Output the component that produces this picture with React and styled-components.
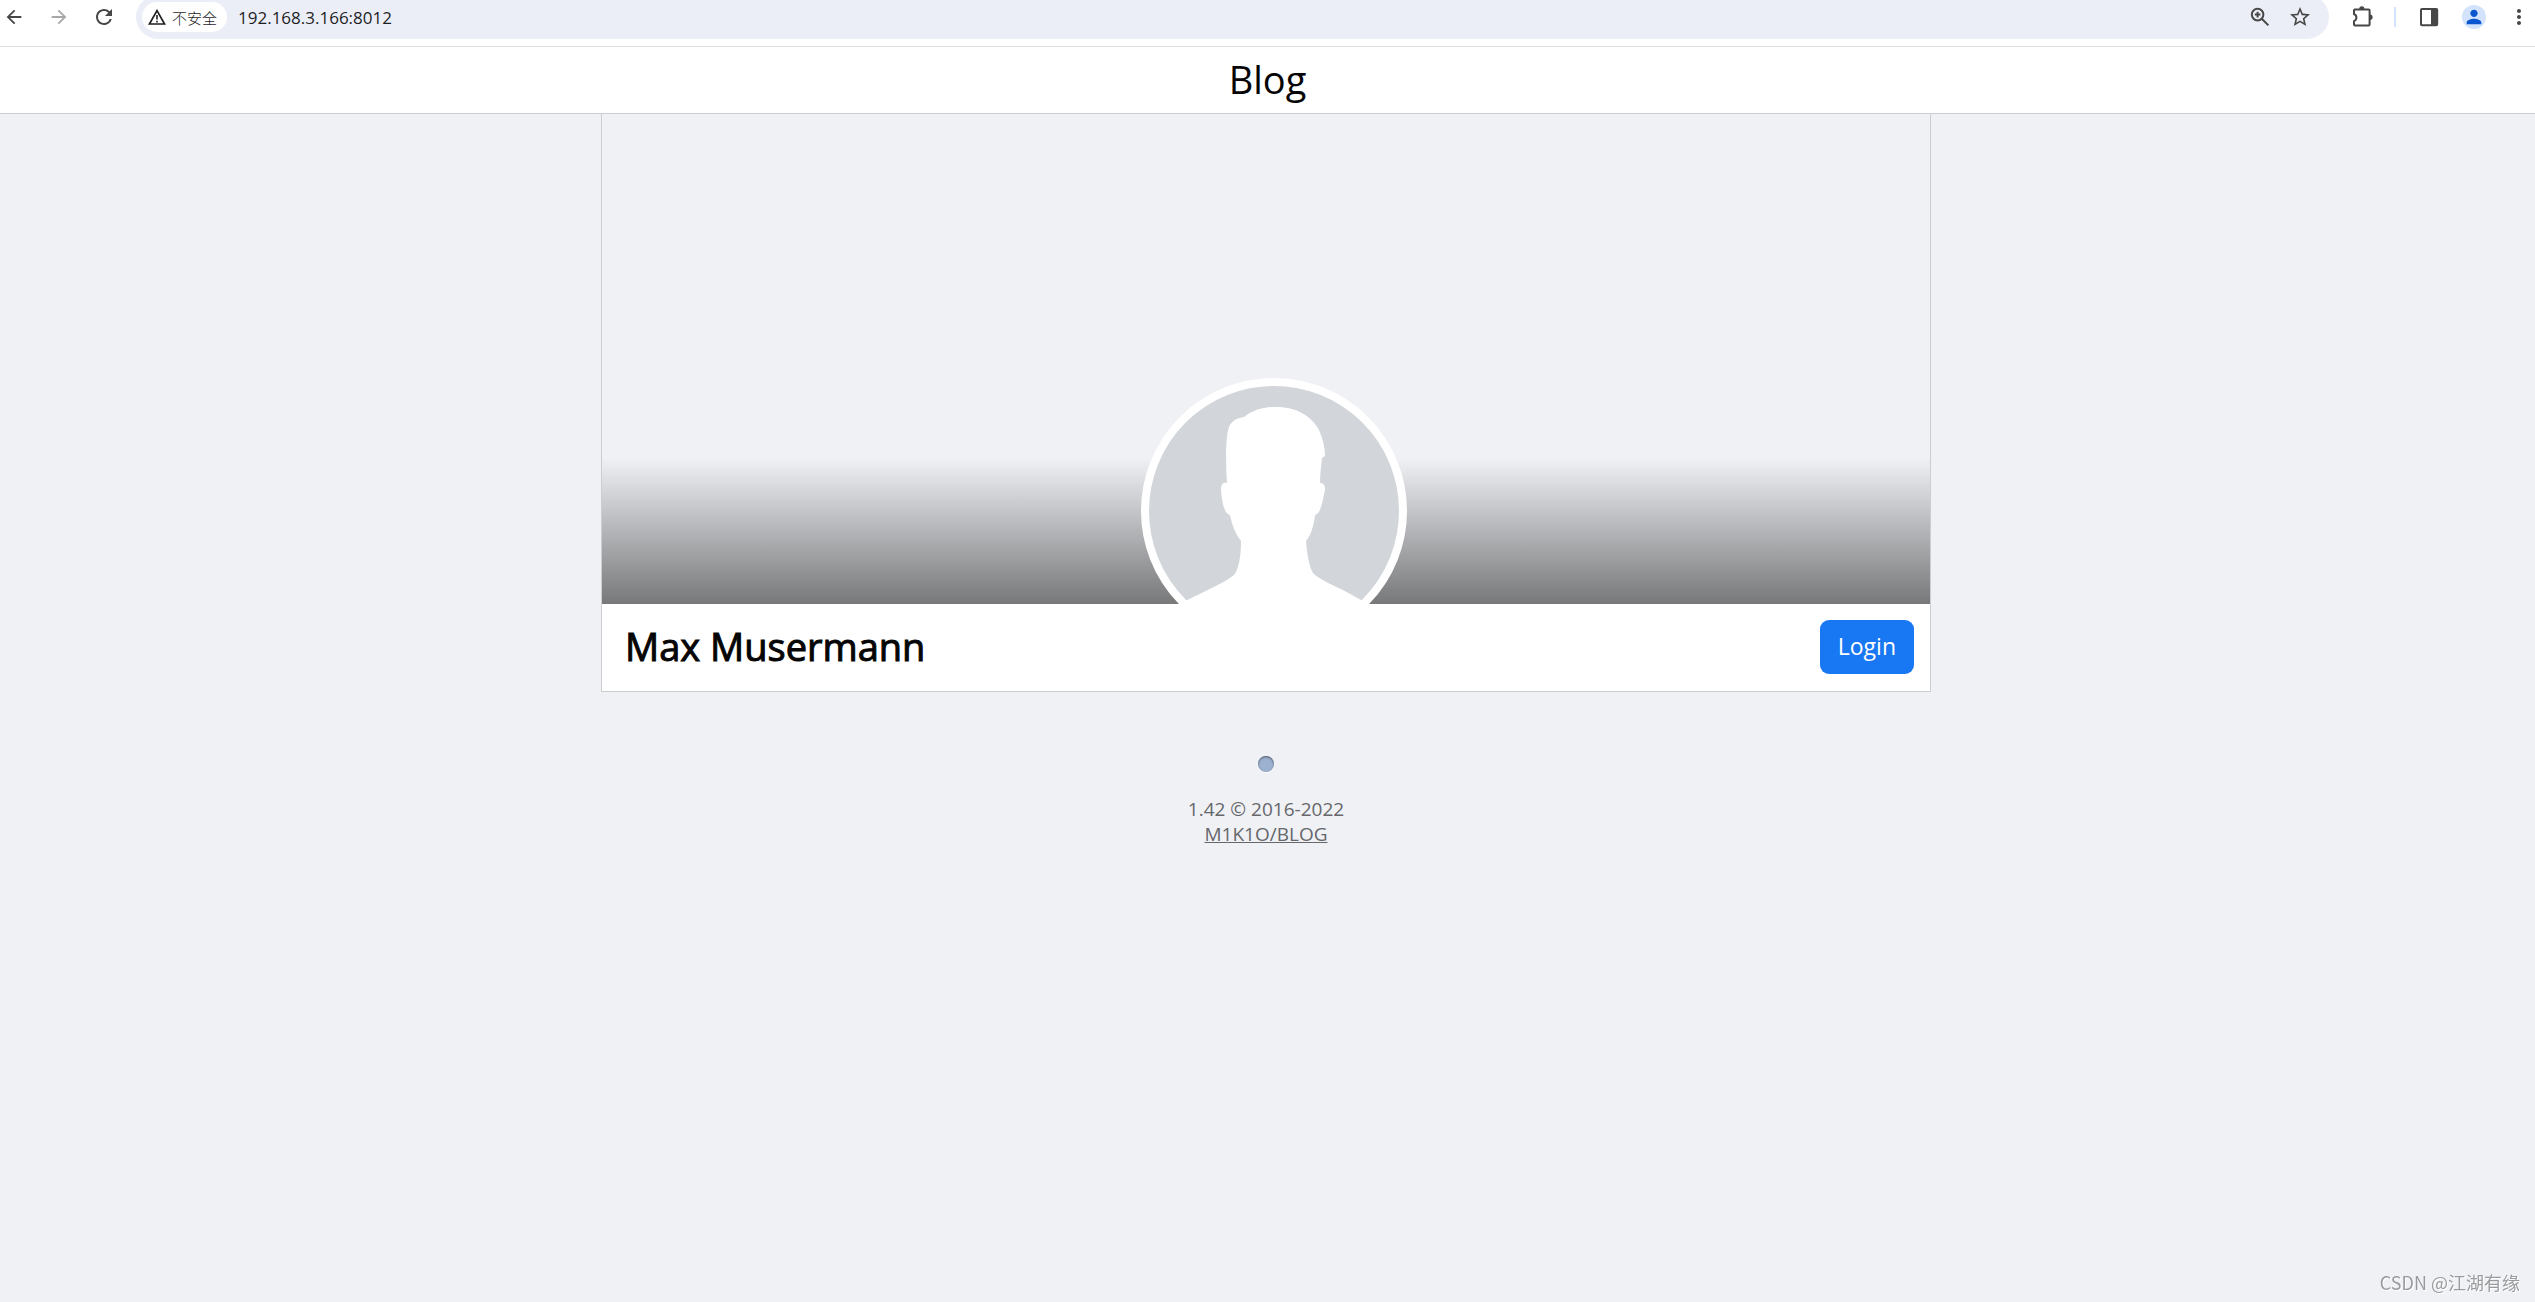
import React from "react";
import styled, { createGlobalStyle } from "styled-components";
import { MdArrowBack, MdArrowForward, MdRefresh, MdStarOutline, MdMoreVert, MdPerson } from "react-icons/md";

const GlobalStyle = createGlobalStyle`
  * { box-sizing: border-box; }
  body {
    margin: 0;
    background: #f0f1f5;
    color: #050505;
    font-family: "Open Sans", "Noto Sans CJK SC", sans-serif;
  }
`;

const Page = styled.div`
  min-height: 100vh;
  overflow-x: hidden;
`;

const Toolbar = styled.div`
  display: flex;
  height: 47px;
  background: #fff;
  border-bottom: 1px solid #dfe0e1;
  overflow: hidden;
`;

const NavButtons = styled.div`
  display: flex;
  gap: 21px;
  width: 136px;
  padding: 5px 0 0 2px;
`;

const IconButton = styled.button`
  display: flex;
  align-items: center;
  justify-content: center;
  width: 24px;
  height: 24px;
  padding: 0;
  border: 0;
  border-radius: 50%;
  background: ${(p) => p.$bg || "none"};
  color: ${(p) => p.$color || "#474747"};
  flex: none;
`;

const AddressBar = styled.div`
  flex: 1;
  display: flex;
  align-items: center;
  height: 44px;
  margin-top: -5px;
  padding: 0 17px 0 6px;
  border-radius: 22px;
  background: #ebeef7;
`;

const SecurityChip = styled.button`
  display: flex;
  align-items: center;
  gap: 6px;
  height: 30px;
  padding: 0 10px 0 6px;
  border: 0;
  border-radius: 15px;
  background: #fff;
  color: #1f1f1f;
  font: 300 15px "Noto Sans CJK SC", sans-serif;
`;

const AddressInput = styled.input`
  flex: 1;
  min-width: 0;
  padding: 0 0 0 11px;
  border: 0;
  background: none;
  color: #1f1f1f;
  font: 17px "Open Sans", sans-serif;
`;

const AddressActions = styled.div`
  display: flex;
  gap: 16px;
`;

const BrowserActions = styled.div`
  display: flex;
  align-items: flex-start;
  padding: 5px 4px 0 21px;
`;

const Divider = styled.span`
  width: 2px;
  height: 20px;
  margin: 2px 21px 0 20px;
  background: #d3e3fd;
`;

const BrowserMenu = styled.div`
  display: flex;
  gap: 21px;
`;

const SiteHeader = styled.header`
  height: 67px;
  background: #fff;
  border-bottom: 1px solid #cccdd1;
  text-align: center;
  font-size: 38px;
  line-height: 64px;
`;

const Content = styled.main`
  display: flex;
  flex-direction: column;
  align-items: center;
  padding: 0 3px 0 0;
`;

const ProfileCard = styled.section`
  width: 100%;
  max-width: 1330px;
  border: 1px solid #cccdd1;
  border-top: 0;
`;

const Cover = styled.div`
  position: relative;
  height: 490px;
  overflow: hidden;
  background: linear-gradient(transparent 344px, rgba(0, 0, 0, 0.5));
`;

const Avatar = styled.svg`
  position: absolute;
  top: 264px;
  left: calc(50% + 8px);
  width: 266px;
  height: 266px;
  margin-left: -133px;
`;

const ProfileBar = styled.div`
  display: flex;
  align-items: center;
  justify-content: space-between;
  height: 87px;
  padding: 0 16px 1px 23px;
  background: #fff;
`;

const Name = styled.h1`
  margin: 0;
  font-size: 38px;
  font-weight: 400;
  line-height: 50px;
  padding-bottom: 2px;
  -webkit-text-stroke: 1px currentColor;
`;

const LoginButton = styled.button`
  height: 54px;
  padding: 0 18px 2px;
  border: 0;
  border-radius: 9px;
  background: #1877f2;
  color: #fff;
  font: 23px "Open Sans", sans-serif;
`;

const Loader = styled.div`
  width: 16px;
  height: 16px;
  margin: 64px 0 25px;
  border-radius: 50%;
  background: #9cb0cf;
  box-shadow: inset 0 1px 2px rgba(0, 0, 0, 0.5), 0 1px 0 #fff;
`;

const Footer = styled.footer`
  color: #65676b;
  font-size: 19px;
  line-height: 25px;
  text-align: center;
  a { color: inherit; }
`;

const Watermark = styled.div`
  position: fixed;
  right: 15px;
  bottom: 7px;
  color: #9a9b9e;
  font: 18px/26px "Noto Sans CJK SC", sans-serif;
  text-shadow: 1px 1px 0 #fff;
`;

const WarningIcon = () => (
  <svg width="18" height="16" viewBox="0 0 18 16" fill="none" stroke="currentColor" aria-hidden="true">
    <path d="M9 1.6 16.6 15H1.4Z" strokeWidth="1.7" />
    <path d="M9 6v4.6M9 11.8v1.6" strokeWidth="1.6" />
  </svg>
);

const ZoomIcon = () => (
  <svg width="24" height="24" viewBox="0 0 24 24" fill="none" stroke="currentColor" strokeWidth="2" aria-hidden="true">
    <circle cx="9.6" cy="9.6" r="5.8" />
    <path d="m13.8 13.8 6.6 6.6M9.6 6.8v5.6M6.8 9.6h5.6" />
  </svg>
);

const PuzzleIcon = () => (
  <svg width="24" height="24" viewBox="0 0 24 24" aria-hidden="true">
    <path
      d="M4 4.4h14.6q1 0 1 1v14.2q0 1-1 1H5q-1 0-1-1v-3.4a3.9 3.9 0 0 0 0-7.2V5.4q0-1 1-1Z"
      fill="none" stroke="currentColor" strokeWidth="2"
    />
    <path d="M9.2 4a2.6 2.8 0 0 1 5.2 0ZM20 9.5a2.6 2.7 0 0 1 0 5.4Z" fill="currentColor" />
  </svg>
);

const SidePanelIcon = () => (
  <svg width="24" height="24" viewBox="0 0 24 24" aria-hidden="true">
    <rect x="4" y="4" width="16.2" height="16.2" rx="1" fill="none" stroke="currentColor" strokeWidth="2" />
    <path d="M14 4h6v16h-6Z" fill="currentColor" />
  </svg>
);

function ProfilePicture() {
  return (
    <Avatar viewBox="0 0 266 266" role="img" aria-label="Profile picture">
      <circle cx="133" cy="133" r="129" fill="#d2d5da" stroke="#fff" strokeWidth="8" />
      <path
        fill="#fff"
        d="M86 105C85 88 84 61 88 49C91 42 97 40 103 39C112 32 122 29 135 29C157 29 171 39 178 52C182 61 184 70 184 78L181 80C180 89 179 97 179 105C184 105 185 110 183 116C181 127 179 136 174 137C173 147 170 157 165 163C166 176 168 188 172 195C178 202 194 207 222 223L222 266H44V223C69 211 86 203 93 197C98 191 100 177 100 163C95 157 91 147 89 137C83 136 81 123 80 112C80 106 82 104 86 105Z"
      />
    </Avatar>
  );
}

export default function App() {
  return (
    <Page>
      <GlobalStyle />
      <Toolbar>
        <NavButtons>
          <IconButton aria-label="Back"><MdArrowBack size={22} /></IconButton>
          <IconButton aria-label="Forward" $color="#a8a8a8"><MdArrowForward size={22} /></IconButton>
          <IconButton aria-label="Reload"><MdRefresh size={24} /></IconButton>
        </NavButtons>
        <AddressBar>
          <SecurityChip><WarningIcon />不安全</SecurityChip>
          <AddressInput aria-label="Address" defaultValue="192.168.3.166:8012" />
          <AddressActions>
            <IconButton aria-label="Zoom"><ZoomIcon /></IconButton>
            <IconButton aria-label="Bookmark"><MdStarOutline size={24} /></IconButton>
          </AddressActions>
        </AddressBar>
        <BrowserActions>
          <IconButton aria-label="Extensions"><PuzzleIcon /></IconButton>
          <Divider />
          <BrowserMenu>
            <IconButton aria-label="Side panel"><SidePanelIcon /></IconButton>
            <IconButton aria-label="Account" $bg="#d3e3fd" $color="#0b57d0"><MdPerson size={22} /></IconButton>
            <IconButton aria-label="Menu"><MdMoreVert size={26} /></IconButton>
          </BrowserMenu>
        </BrowserActions>
      </Toolbar>
      <SiteHeader>Blog</SiteHeader>
      <Content>
        <ProfileCard>
          <Cover><ProfilePicture /></Cover>
          <ProfileBar>
            <Name>Max Musermann</Name>
            <LoginButton>Login</LoginButton>
          </ProfileBar>
        </ProfileCard>
        <Loader role="status" aria-label="Loading" />
        <Footer>
          1.42 © 2016-2022<br />
          <a href="#blog">M1K1O/BLOG</a>
        </Footer>
      </Content>
      <Watermark>CSDN @江湖有缘</Watermark>
    </Page>
  );
}
